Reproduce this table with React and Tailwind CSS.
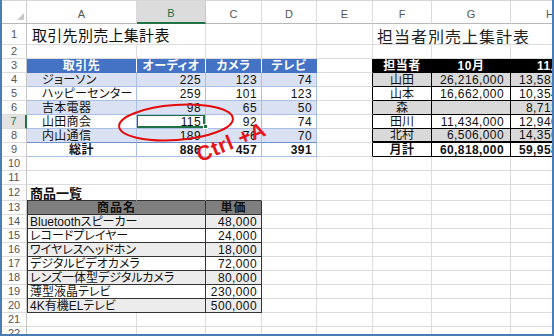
const COLS = ['A', 'B', 'C', 'D', 'E', 'F', 'G', 'H']
const ROWS = Array.from({ length: 22 }, (_, i) => i + 1)

const t1 = [
  ['ジョーソン', 225, 123, 74],
  ['ハッピーセンター', 259, 101, 123],
  ['吉本電器', 98, 65, 50],
  ['山田商会', 115, 92, 74],
  ['内山通信', 189, 76, 70],
]

const t2 = [
  ['山田', '26,216,000', '13,582,000'],
  ['山本', '16,662,000', '10,354,000'],
  ['森', '', '8,712,000'],
  ['田川', '11,434,000', '12,940,000'],
  ['北村', '6,506,000', '14,356,000'],
]

const products = [
  ['Bluetoothスピーカー', '48,000'],
  ['レコードプレイヤー', '24,000'],
  ['ワイヤレスヘッドホン', '18,000'],
  ['デジタルビデオカメラ', '72,000'],
  ['レンズ一体型デジタルカメラ', '80,000'],
  ['薄型液晶テレビ', '230,000'],
  ['4K有機ELテレビ', '500,000'],
]

const num = 'justify-end pr-[4px] text-[12px] tracking-[0.4px]'

function buildSpec() {
  const spec = {}
  const skip = new Set()

  // row 1 / row 12 titles
  spec.A1 = { span: 2, text: '取引先別売上集計表', cls: 'pl-[5px] pt-[3px] text-[15px] tracking-[0.3px] font-["Noto_Sans_CJK_JP",sans-serif]' }
  skip.add('B1')
  spec.F1 = { span: 3, text: '担当者別売上集計表', cls: 'pl-[4px] pt-[3px] text-[16px] tracking-[1px] font-["Noto_Sans_CJK_JP",sans-serif] text-[#222]' }
  skip.add('G1')
  skip.add('H1')
  spec.A12 = { text: '商品一覧', cls: 'pl-[3px] pt-[2px] text-[13px] font-bold', bb: 'border-b-[#333]' }
  spec.B12 = { bb: 'border-b-[#333]' }
  spec.C12 = { bb: 'border-b-[#333]' }

  // table 1 header
  const hdr1 = ['取引先', 'オーディオ', 'カメラ', 'テレビ']
  hdr1.forEach((t, i) => {
    spec[COLS[i] + '3'] = {
      text: t,
      bg: 'bg-[#4472c4]',
      br: i === 3 ? 'border-r-[#4472c4]' : 'border-r-white',
      bb: 'border-b-[#4472c4]',
      cls: 'justify-center text-white font-bold text-[12px] tracking-[0.5px]',
    }
  })
  // table 1 body
  t1.forEach((r, i) => {
    const row = 4 + i
    const bg = i % 2 === 0 ? 'bg-[#d9e1f2]' : 'bg-white'
    const bb = i === 4 ? 'border-b-[#6f8fd0]' : 'border-b-[#a9bfe6]'
    spec['A' + row] = { text: r[0], bg, br: 'border-r-[#a9bfe6]', bb, cls: 'pl-[15px] text-[12px] tracking-[0.3px]' }
    r.slice(1).forEach((v, j) => {
      spec[COLS[j + 1] + row] = { text: v, bg, br: 'border-r-[#a9bfe6]', bb, cls: num }
    })
  })
  spec.A9 = { text: '総計', br: 'border-r-[#a9bfe6]', bb: 'border-b-[#a9bfe6]', cls: 'justify-center font-bold text-[12px] tracking-[0.5px]' }
  ;[886, 457, 391].forEach((v, j) => {
    spec[COLS[j + 1] + '9'] = { text: v, br: 'border-r-[#a9bfe6]', bb: 'border-b-[#a9bfe6]', cls: num + ' font-bold' }
  })

  // table 2 left edge
  for (let r = 3; r <= 9; r++) spec['E' + r] = { br: 'border-r-black' }
  spec.F3 = { text: '担当者', bg: 'bg-black', br: 'border-r-black', bb: 'border-b-black', cls: 'justify-center text-white font-bold text-[12px] tracking-[0.5px]' }
  spec.G3 = { text: '10月', bg: 'bg-black', br: 'border-r-black', bb: 'border-b-black', cls: 'justify-center text-white font-bold text-[12px] tracking-[0.5px]' }
  spec.H3 = { text: '11月', bg: 'bg-black', br: 'border-r-black', bb: 'border-b-black', cls: 'justify-center text-white font-bold text-[12px] tracking-[0.5px]' }
  t2.forEach((r, i) => {
    const row = 4 + i
    const bg = i % 2 === 0 ? 'bg-[#d9d9d9]' : 'bg-white'
    const bw = i === 4 ? 'border-b-2' : 'border-b'
    spec['F' + row] = { text: r[0], bg, bw, br: 'border-r-black', bb: 'border-b-black', cls: 'justify-center text-[12px]' }
    spec['G' + row] = { text: r[1], bg, bw, br: 'border-r-black', bb: 'border-b-black', cls: num + ' pr-[6px]' }
    spec['H' + row] = { text: r[2], bg, bw, br: 'border-r-black', bb: 'border-b-black', cls: num + ' pr-[6px]' }
  })
  spec.F9 = { text: '月計', br: 'border-r-black', bb: 'border-b-black', cls: 'justify-center font-bold text-[12px] tracking-[0.5px]' }
  spec.G9 = { text: '60,818,000', br: 'border-r-black', bb: 'border-b-black', cls: num + ' pr-[6px] font-bold' }
  spec.H9 = { text: '59,958,000', br: 'border-r-black', bb: 'border-b-black', cls: num + ' pr-[6px] font-bold' }

  // table 3
  spec.A13 = { span: 2, text: '商品名', bg: 'bg-[#7f7f7f]', br: 'border-r-[#333]', bb: 'border-b-[#333]', cls: 'justify-center font-bold text-[12px] tracking-[1px] border-l border-l-[#333]' }
  skip.add('B13')
  spec.C13 = { text: '単価', bg: 'bg-[#7f7f7f]', br: 'border-r-[#333]', bb: 'border-b-[#333]', cls: 'justify-center font-bold text-[12px] tracking-[1px]' }
  products.forEach((p, i) => {
    const row = 14 + i
    const bg = i % 2 === 0 ? 'bg-[#ececec]' : 'bg-white'
    spec['A' + row] = { span: 2, text: p[0], bg, br: 'border-r-[#333]', bb: 'border-b-[#333]', cls: 'pl-[2px] text-[12px] border-l border-l-[#333]' }
    skip.add('B' + row)
    spec['C' + row] = { text: p[1], bg, br: 'border-r-[#333]', bb: 'border-b-[#333]', cls: num + ' pr-[2px]' }
  })

  return { spec, skip }
}

function Cell({ c, r, s }) {
  const span = s?.span === 2 ? 'col-span-2' : s?.span === 3 ? 'col-span-3' : ''
  const bg = s?.bg ?? 'bg-white'
  const br = s?.br ?? 'border-r-[#dcdcdc]'
  const bb = s?.bb ?? 'border-b-[#dcdcdc]'
  const bw = s?.bw ?? 'border-b'
  const selected = c === 'B' && r === 7
  return (
    <div className={`relative flex items-center overflow-hidden whitespace-nowrap border-r ${bw} ${span} ${bg} ${br} ${bb} ${s?.cls ?? ''}`}>
      {s?.text}
      {selected && (
        <div className="absolute -left-[1px] -top-[1px] right-[0px] bottom-[0px] border-2 border-[#217346]" />
      )}
    </div>
  )
}

export default function App() {
  const { spec, skip } = buildSpec()

  return (
    <div
      className="relative w-[554px] h-[336px] overflow-hidden bg-white border-l-2 border-r-2 border-b-2 border-[#4a7db6] text-[#111] [font-feature-settings:'palt'] font-['Liberation_Sans','Noto_Sans_CJK_JP',sans-serif]"
    >
      <div className="grid grid-cols-[25px_110px_69px_56px_55px_56px_59px_79px_79px] grid-rows-[23px_21px_14px_14px_14px_14px_14px_14px_14px_14px_14px_14px_16px_14px_14px_14px_14px_14px_14px_14px_14px_14px_14px] border-t border-t-[#d6d6d6]">
        {/* corner */}
        <div className="relative bg-white border-r border-b border-r-[#d0d0d0] border-b-[#b8b8b8]">
          <svg className="absolute right-[2px] bottom-[3px]" width="7" height="7" viewBox="0 0 7 7">
            <polygon points="7,0 7,7 0,7" fill="#c9c9c9" />
          </svg>
        </div>
        {COLS.map((c) => (
          <div
            key={c}
            className={`flex items-center justify-center pt-[4px] text-[11px] border-r ${
              c === 'B'
                ? 'bg-[#dcdcdc] text-[#217346] border-b-2 border-b-[#217346] border-r-[#c8c8c8]'
                : 'bg-white text-[#555] border-b border-b-[#b8b8b8] border-r-[#dadada]'
            }`}
          >
            {c}
          </div>
        ))}
        {ROWS.map((r) => [
          <div
            key={'h' + r}
            className={`flex items-center justify-center text-[11px] border-b border-b-[#dcdcdc] ${
              r === 7
                ? 'bg-[#e2e2e2] text-[#217346] border-r-2 border-r-[#217346]'
                : 'bg-white text-[#555] border-r border-r-[#c4c4c4]'
            }`}
          >
            {r}
          </div>,
          ...COLS.filter((c) => !skip.has(c + r)).map((c) => (
            <Cell key={c + r} c={c} r={r} s={spec[c + r]} />
          )),
        ])}
      </div>

      {/* fill handle of the selected cell */}
      <div className="absolute left-[201px] top-[124px] w-[5px] h-[5px] bg-[#217346] border border-white" />

      {/* red annotation */}
      <svg className="absolute left-[112px] top-[101px]" width="124" height="44" viewBox="0 0 124 44">
        <ellipse cx="62" cy="21.5" rx="57" ry="17.5" transform="rotate(-4 62 21.5)" fill="none" stroke="#e50b0b" strokeWidth="2" />
      </svg>
      <div className="absolute left-[199px] top-[144px] origin-bottom-left -rotate-[22deg] leading-none text-[21px] font-bold text-[#e5161b] tracking-[0.5px] font-['Liberation_Sans',sans-serif] whitespace-nowrap">
        Ctrl +A
      </div>
    </div>
  )
}
